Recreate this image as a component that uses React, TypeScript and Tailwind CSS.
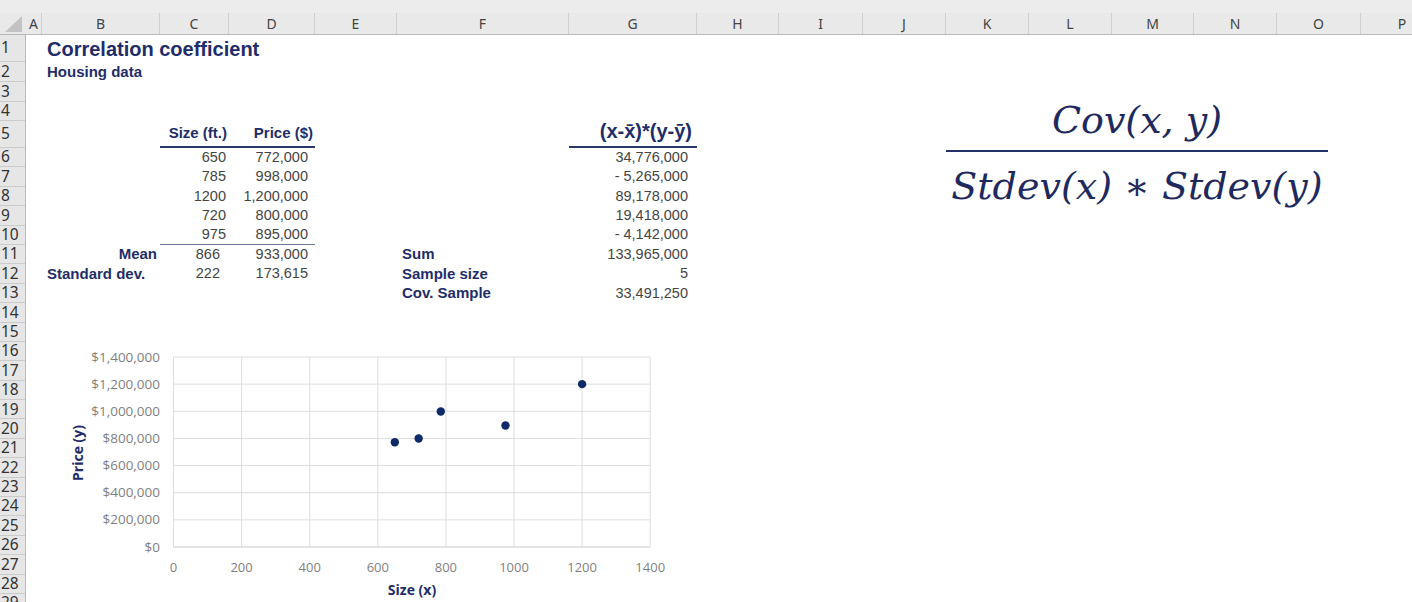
const COLS = [
  { l: "A", w: "w-[16px] min-w-[16px]" },
  { l: "B", w: "w-[118px] min-w-[118px]" },
  { l: "C", w: "w-[69px] min-w-[69px]" },
  { l: "D", w: "w-[86px] min-w-[86px]" },
  { l: "E", w: "w-[82px] min-w-[82px]" },
  { l: "F", w: "w-[172px] min-w-[172px]" },
  { l: "G", w: "w-[128px] min-w-[128px]" },
  { l: "H", w: "w-[82px] min-w-[82px]" },
  { l: "I", w: "w-[84px] min-w-[84px]" },
  { l: "J", w: "w-[83px] min-w-[83px]" },
  { l: "K", w: "w-[83px] min-w-[83px]" },
  { l: "L", w: "w-[83px] min-w-[83px]" },
  { l: "M", w: "w-[82px] min-w-[82px]" },
  { l: "N", w: "w-[83px] min-w-[83px]" },
  { l: "O", w: "w-[84px] min-w-[84px]" },
  { l: "P", w: "w-[83px] min-w-[83px]" },
];

const ROWS = [
  { n: 1, h: "h-[27px]" },
  { n: 2, h: "h-[20px]" },
  { n: 3, h: "h-[19.5px]" },
  { n: 4, h: "h-[19.5px]" },
  { n: 5, h: "h-[27px]" },
  ...Array.from({ length: 24 }, (_, i) => ({ n: i + 6, h: "h-[19.4px]" })),
];

const NAVY = "text-[#1f2d6b]";
const num = "text-[14.5px] text-[#454545]";
const lbl = `text-[15px] font-bold ${NAVY}`;

function Cell({ className, children }: { className: string; children: React.ReactNode }) {
  return <div className={`flex items-center whitespace-nowrap ${className}`}>{children}</div>;
}

const sizes = ["650", "785", "1200", "720", "975"];
const prices = ["772,000", "998,000", "1,200,000", "800,000", "895,000"];
const products = ["34,776,000", "- 5,265,000", "89,178,000", "19,418,000", "- 4,142,000"];
const rowStart = ["row-start-6", "row-start-7", "row-start-8", "row-start-9", "row-start-10"];

// scatter chart
const points = [
  [650, 772000],
  [785, 998000],
  [1200, 1200000],
  [720, 800000],
  [975, 895000],
];
const px = (v: number) => 113.5 + v * 0.3405;
const py = (v: number) => 207 - (v / 1400000) * 190;
const yLabels = ["$0", "$200,000", "$400,000", "$600,000", "$800,000", "$1,000,000", "$1,200,000", "$1,400,000"];

function Chart() {
  return (
    <svg className="absolute left-[60px] top-[340px]" width="620" height="262" viewBox="0 0 620 262">
      {yLabels.map((t, i) => (
        <g key={t}>
          <line x1={113.5} x2={590} y1={py(i * 200000)} y2={py(i * 200000)} stroke={i === 0 ? "#c9c9c9" : "#dedede"} strokeWidth="1" />
          <text x="100" y={py(i * 200000) + 4.5} textAnchor="end" fontSize="13.5" fill="#7f7f7f" fontFamily="'Open Sans', sans-serif">
            {t}
          </text>
        </g>
      ))}
      {[0, 200, 400, 600, 800, 1000, 1200, 1400].map((v) => (
        <g key={v}>
          <line x1={px(v)} x2={px(v)} y1={17} y2={207} stroke="#dedede" strokeWidth="1" />
          <text x={px(v)} y="232" textAnchor="middle" fontSize="13" fill="#7f7f7f" fontFamily="'Open Sans', sans-serif">
            {v}
          </text>
        </g>
      ))}
      {points.map(([x, y]) => (
        <circle key={x} cx={px(x)} cy={py(y)} r="4.2" fill="#0f2a68" />
      ))}
      <text x="352" y="255" textAnchor="middle" fontSize="14" fontWeight="700" fill="#1f2d6b" fontFamily="'Open Sans', sans-serif">
        Size (x)
      </text>
      <text transform="translate(23 113) rotate(-90)" textAnchor="middle" fontSize="14" fontWeight="700" fill="#1f2d6b" fontFamily="'Open Sans', sans-serif">
        Price (y)
      </text>
    </svg>
  );
}

export default function App() {
  return (
    <div className="relative w-[1412px] h-[602px] overflow-hidden bg-white font-['Liberation_Sans',Arial,sans-serif]">
      <div className="h-[13px] bg-[#ececec]" />
      {/* column headers */}
      <div className="flex h-[22px] bg-[#e9e9e9] border-b border-[#b9b9b9] font-['Noto_Sans',sans-serif] text-[14px] text-[#444]">
        <div className="relative w-[26px] min-w-[26px]">
          <svg className="absolute left-[5px] top-[3px]" width="18" height="17" viewBox="0 0 18 17">
            <polygon points="0,16 17,16 17,0" fill="#c3c3c3" />
          </svg>
        </div>
        {COLS.map((c) => (
          <div key={c.l} className={`${c.w} flex items-center justify-center border-r border-[#cfcfcf]`}>
            {c.l}
          </div>
        ))}
      </div>

      <div className="flex">
        {/* row numbers */}
        <div className="w-[26px] min-w-[26px] flex flex-col bg-[#e6e6e6] border-r border-[#b9b9b9] font-['Noto_Sans',sans-serif] text-[15.5px] text-[#333]">
          {ROWS.map((r) => (
            <div key={r.n} className={`${r.h} flex items-center pl-[1px] border-b border-[#cbcbcb] leading-none`}>
              {r.n}
            </div>
          ))}
        </div>

        {/* sheet cells */}
        <div className="grid grid-cols-[16px_118px_69px_86px_82px_172px_128px_82px_84px_83px_83px_83px_82px_83px_84px_83px] grid-rows-[27px_20px_19.5px_19.5px_27px_repeat(24,19.4px)]">
          <Cell className={`col-start-2 row-start-1 pl-[5px] text-[20px] font-bold ${NAVY}`}>Correlation coefficient</Cell>
          <Cell className={`col-start-2 row-start-2 pl-[5px] ${lbl}`}>Housing data</Cell>

          <Cell className={`col-start-3 row-start-5 !items-end justify-end pr-[2px] pb-[2px] border-b-2 border-[#2c3868] ${lbl}`}>Size (ft.)</Cell>
          <Cell className={`col-start-4 row-start-5 !items-end justify-end pr-[2px] pb-[2px] border-b-2 border-[#2c3868] ${lbl}`}>Price ($)</Cell>
          <Cell className={`col-start-7 row-start-5 !items-end justify-end pr-[5px] border-b-2 border-[#2c3868] text-[20px] font-bold ${NAVY}`}>
            (x-x̄)*(y-ȳ)
          </Cell>

          {sizes.map((s, i) => (
            <Cell key={"c" + i} className={`col-start-3 ${rowStart[i]} justify-end pr-[3px] ${num} ${i === 4 ? "border-b border-[#6d769c]" : ""}`}>
              {s}
            </Cell>
          ))}
          {prices.map((s, i) => (
            <Cell key={"d" + i} className={`col-start-4 ${rowStart[i]} justify-end pr-[7px] ${num} ${i === 4 ? "border-b border-[#6d769c]" : ""}`}>
              {s}
            </Cell>
          ))}
          {products.map((s, i) => (
            <Cell key={"g" + i} className={`col-start-7 ${rowStart[i]} justify-end pr-[9px] ${num}`}>
              {s}
            </Cell>
          ))}

          <Cell className={`col-start-2 row-start-11 justify-end pr-[3px] ${lbl}`}>Mean</Cell>
          <Cell className={`col-start-3 row-start-11 justify-end pr-[9px] ${num}`}>866</Cell>
          <Cell className={`col-start-4 row-start-11 justify-end pr-[7px] ${num}`}>933,000</Cell>
          <Cell className={`col-start-6 row-start-11 pl-[5px] ${lbl}`}>Sum</Cell>
          <Cell className={`col-start-7 row-start-11 justify-end pr-[9px] ${num}`}>133,965,000</Cell>

          <Cell className={`col-start-2 row-start-12 pl-[5px] ${lbl}`}>Standard dev.</Cell>
          <Cell className={`col-start-3 row-start-12 justify-end pr-[9px] ${num}`}>222</Cell>
          <Cell className={`col-start-4 row-start-12 justify-end pr-[7px] ${num}`}>173,615</Cell>
          <Cell className={`col-start-6 row-start-12 pl-[5px] ${lbl}`}>Sample size</Cell>
          <Cell className={`col-start-7 row-start-12 justify-end pr-[9px] ${num}`}>5</Cell>

          <Cell className={`col-start-6 row-start-13 pl-[5px] ${lbl}`}>Cov. Sample</Cell>
          <Cell className={`col-start-7 row-start-13 justify-end pr-[9px] ${num}`}>33,491,250</Cell>
        </div>
      </div>

      {/* equation object */}
      <div className="absolute left-[946px] top-[98px] w-[382px] flex flex-col items-center font-['DejaVu_Serif',serif] italic text-[38px] text-[#1e2a5e]">
        <div className="leading-[44px] pb-[8px]">Cov(x, y)</div>
        <div className="h-[2px] w-full bg-[#24306a]" />
        <div className="leading-[44px] pt-[12px]">Stdev(x) ∗ Stdev(y)</div>
      </div>

      <Chart />
    </div>
  );
}
